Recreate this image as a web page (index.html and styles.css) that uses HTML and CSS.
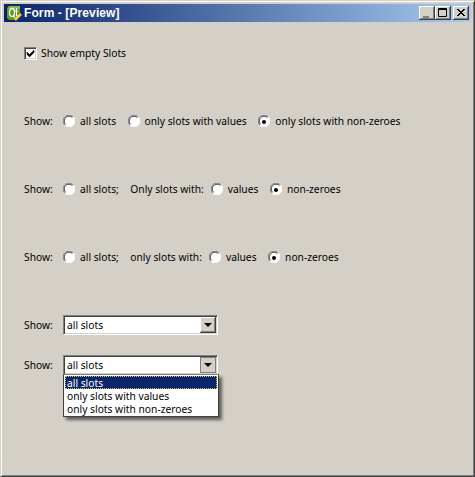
FILE: index.html
```html
<!DOCTYPE html>
<html lang="en">
<head>
    <meta charset="UTF-8">
    <title>Form - [Preview]</title>
    <link rel="stylesheet" href="styles.css">
</head>
<body>
    <svg class="defs" width="0" height="0">
        <symbol id="radio" viewBox="0 0 12 12">
            <circle cx="6" cy="6" r="5.5" fill="#fff"/>
            <path d="M1.8 10.2A5.5 5.5 0 0 1 10.2 1.8" fill="none" stroke="#808080"/>
            <path d="M2.6 9.4A4.5 4.5 0 0 1 9.4 2.6" fill="none" stroke="#404040"/>
            <path d="M1.8 10.2A5.5 5.5 0 0 0 10.2 1.8" fill="none" stroke="#fff"/>
        </symbol>
    </svg>

    <div class="window">
        <div class="titlebar">
            <svg class="app-icon" width="16" height="16" viewBox="0 0 16 16">
                <path d="M3 1h11v10l-4 4h-7l-2-2v-10z" fill="#5f9a2a"/>
                <path d="M3 1h11v3h-12z" fill="#86bb45"/>
                <ellipse cx="6" cy="7.500" rx="2.500" ry="4" fill="none" stroke="#fff" stroke-width="1.3"/>
                <path d="M7 10l2 3M10.500 3v8h2M9 6h3" fill="none" stroke="#fff" stroke-width="1.100"/>
                <path d="M9 15l6-6" stroke="#f2d21f" stroke-width="2.500"/>
            </svg>
            <span class="title">Form - [Preview]</span>
            <div class="title-buttons">
                <div class="title-btn"><svg width="16" height="14"><rect x="4" y="10" width="6" height="2" fill="#808080"/></svg></div>
                <div class="title-btn"><svg width="16" height="14"><path d="M3.500 2.500h8v8h-8zM3.500 3.500h8" fill="none" stroke="#000"/></svg></div>
                <div class="title-btn close"><svg width="16" height="14"><path d="M4 3l7 7M5 3l7 7M11 3l-7 7M12 3l-7 7" stroke="#000" fill="none"/></svg></div>
            </div>
        </div>

        <div class="form">
            <label class="check-row">
                <span class="checkbox"><svg width="9" height="9" viewBox="0 0 9 9"><path d="M1 3l2.500 2.500 4.500-4.500v2.500l-4.500 4.500-2.500-2.500z" fill="#000" stroke="#000" stroke-width=".5"/></svg></span>
                Show empty Slots
            </label>

            <div class="row">
                <span class="show">Show:</span>
                <span class="option"><svg class="radio"><use href="#radio"/></svg>all slots</span>
                <span class="option"><svg class="radio"><use href="#radio"/></svg>only slots with values</span>
                <span class="option"><svg class="radio"><use href="#radio"/></svg><i class="dot"></i>only slots with non-zeroes</span>
            </div>

            <div class="row">
                <span class="show">Show:</span>
                <span class="option"><svg class="radio"><use href="#radio"/></svg>all slots;</span>
                <span class="with">Only slots with:</span>
                <span class="option"><svg class="radio"><use href="#radio"/></svg>values</span>
                <span class="option"><svg class="radio"><use href="#radio"/></svg><i class="dot"></i>non-zeroes</span>
            </div>

            <div class="row">
                <span class="show">Show:</span>
                <span class="option"><svg class="radio"><use href="#radio"/></svg>all slots;</span>
                <span class="with">only slots with:</span>
                <span class="option"><svg class="radio"><use href="#radio"/></svg>values</span>
                <span class="option"><svg class="radio"><use href="#radio"/></svg><i class="dot"></i>non-zeroes</span>
            </div>

            <div class="row combo-row">
                <span class="show">Show:</span>
                <div class="combo">
                    <span class="combo-text">all slots</span>
                    <span class="combo-btn"><i class="arrow"></i></span>
                </div>
            </div>

            <div class="row combo-row second">
                <span class="show">Show:</span>
                <div class="combo open">
                    <span class="combo-text">all slots</span>
                    <span class="combo-btn pressed"><i class="arrow"></i></span>
                    <ul class="popup">
                        <li class="current">all slots</li>
                        <li>only slots with values</li>
                        <li>only slots with non-zeroes</li>
                    </ul>
                </div>
            </div>
        </div>
    </div>
</body>
</html>
```

FILE: styles.css
```css
html, body {
    margin: 0;
    padding: 0;
    height: 100%;
    overflow: hidden;
}
body {
    font-family: "Noto Sans", sans-serif;
    font-size: 10.25px;
    color: #000;
    background-color: #d4d0c8;
}
.defs {
    position: absolute;
}
.window {
    box-sizing: border-box;
    height: 477px;
    padding: 3px;
    border: 1px solid;
    border-color: #d4d0c8 #404040 #404040 #d4d0c8;
    box-shadow: inset 1px 1px 0 #fff, inset -1px -1px 0 #808080;
}
.titlebar {
    display: flex;
    align-items: center;
    height: 18px;
    padding-left: 2px;
    background: linear-gradient(to right, #0a246a, #a6caf0);
    color: #fff;
}
.app-icon {
    flex: none;
}
.title {
    margin-left: 2px;
    font-family: "Liberation Sans", sans-serif;
    font-size: 12px;
    letter-spacing: 0.1px;
    font-weight: bold;
}
.title-buttons {
    display: flex;
    margin-left: auto;
    margin-right: 2px;
}
.title-btn {
    box-sizing: border-box;
    width: 16px;
    height: 14px;
    background-color: #d4d0c8;
    box-shadow: inset -1px -1px 0 #404040, inset 1px 1px 0 #fff, inset -2px -2px 0 #808080;
}
.title-btn svg {
    display: block;
}
.title-btn.close {
    margin-left: 2px;
}

.form {
    padding: 23px 0 0 20px;
}
.check-row {
    display: flex;
    align-items: center;
    height: 16px;
    gap: 4px;
}
.checkbox {
    box-sizing: border-box;
    display: flex;
    align-items: center;
    justify-content: center;
    width: 13px;
    height: 13px;
    background-color: #fff;
    border: 1px solid;
    border-color: #808080 #fff #fff #808080;
    box-shadow: inset 1px 1px 0 #404040, inset -1px -1px 0 #d4d0c8;
}
.row {
    display: flex;
    align-items: center;
    height: 16px;
    margin-top: 52px;
}
.show {
    width: 39px;
}
.option {
    position: relative;
    display: flex;
    align-items: center;
    margin-right: 11.5px;
}
.radio {
    width: 12px;
    height: 12px;
    margin-right: 5px;
}
.dot {
    position: absolute;
    left: 4px;
    top: 6px;
    width: 4px;
    height: 4px;
    border-radius: 50%;
    background-color: #000;
}
.with {
    margin-right: 7px;
}

.row.combo-row {
    margin-top: 50px;
    height: 20px;
}
.row.combo-row.second {
    margin-top: 20px;
}
.combo {
    position: relative;
    box-sizing: border-box;
    display: flex;
    width: 155px;
    height: 20px;
    background-color: #fff;
    border: 1px solid;
    border-color: #808080 #fff #fff #808080;
    box-shadow: inset 1px 1px 0 #404040, inset -1px -1px 0 #d4d0c8;
}
.combo-text {
    flex: 1;
    padding-left: 3px;
    line-height: 18px;
}
.combo-btn {
    box-sizing: border-box;
    display: flex;
    align-items: center;
    justify-content: center;
    width: 16px;
    height: 16px;
    margin: 1px;
    background-color: #d4d0c8;
    box-shadow: inset -1px -1px 0 #404040, inset 1px 1px 0 #fff, inset -2px -2px 0 #808080;
}
.combo-btn.pressed {
    box-shadow: inset 0 0 0 1px #808080;
}
.arrow {
    width: 0;
    height: 0;
    border-style: solid;
    border-width: 4px 4px 0;
    border-color: #000 transparent transparent;
}
.popup {
    position: absolute;
    left: -1px;
    top: 18px;
    box-sizing: border-box;
    width: 156px;
    margin: 0;
    padding: 1px;
    list-style: none;
    background-color: #fff;
    border: 1px solid #404040;
    border-top-color: #808080;
    box-shadow: 3px 3px 3px rgba(0,0,0,0.55);
}
.popup li {
    height: 13px;
    line-height: 15px;
    padding-left: 2px;
}
.popup li.current {
    background-color: #0a246a;
    color: #fff;
    outline: 1px dotted #d4c060;
    outline-offset: -1px;
}
```
